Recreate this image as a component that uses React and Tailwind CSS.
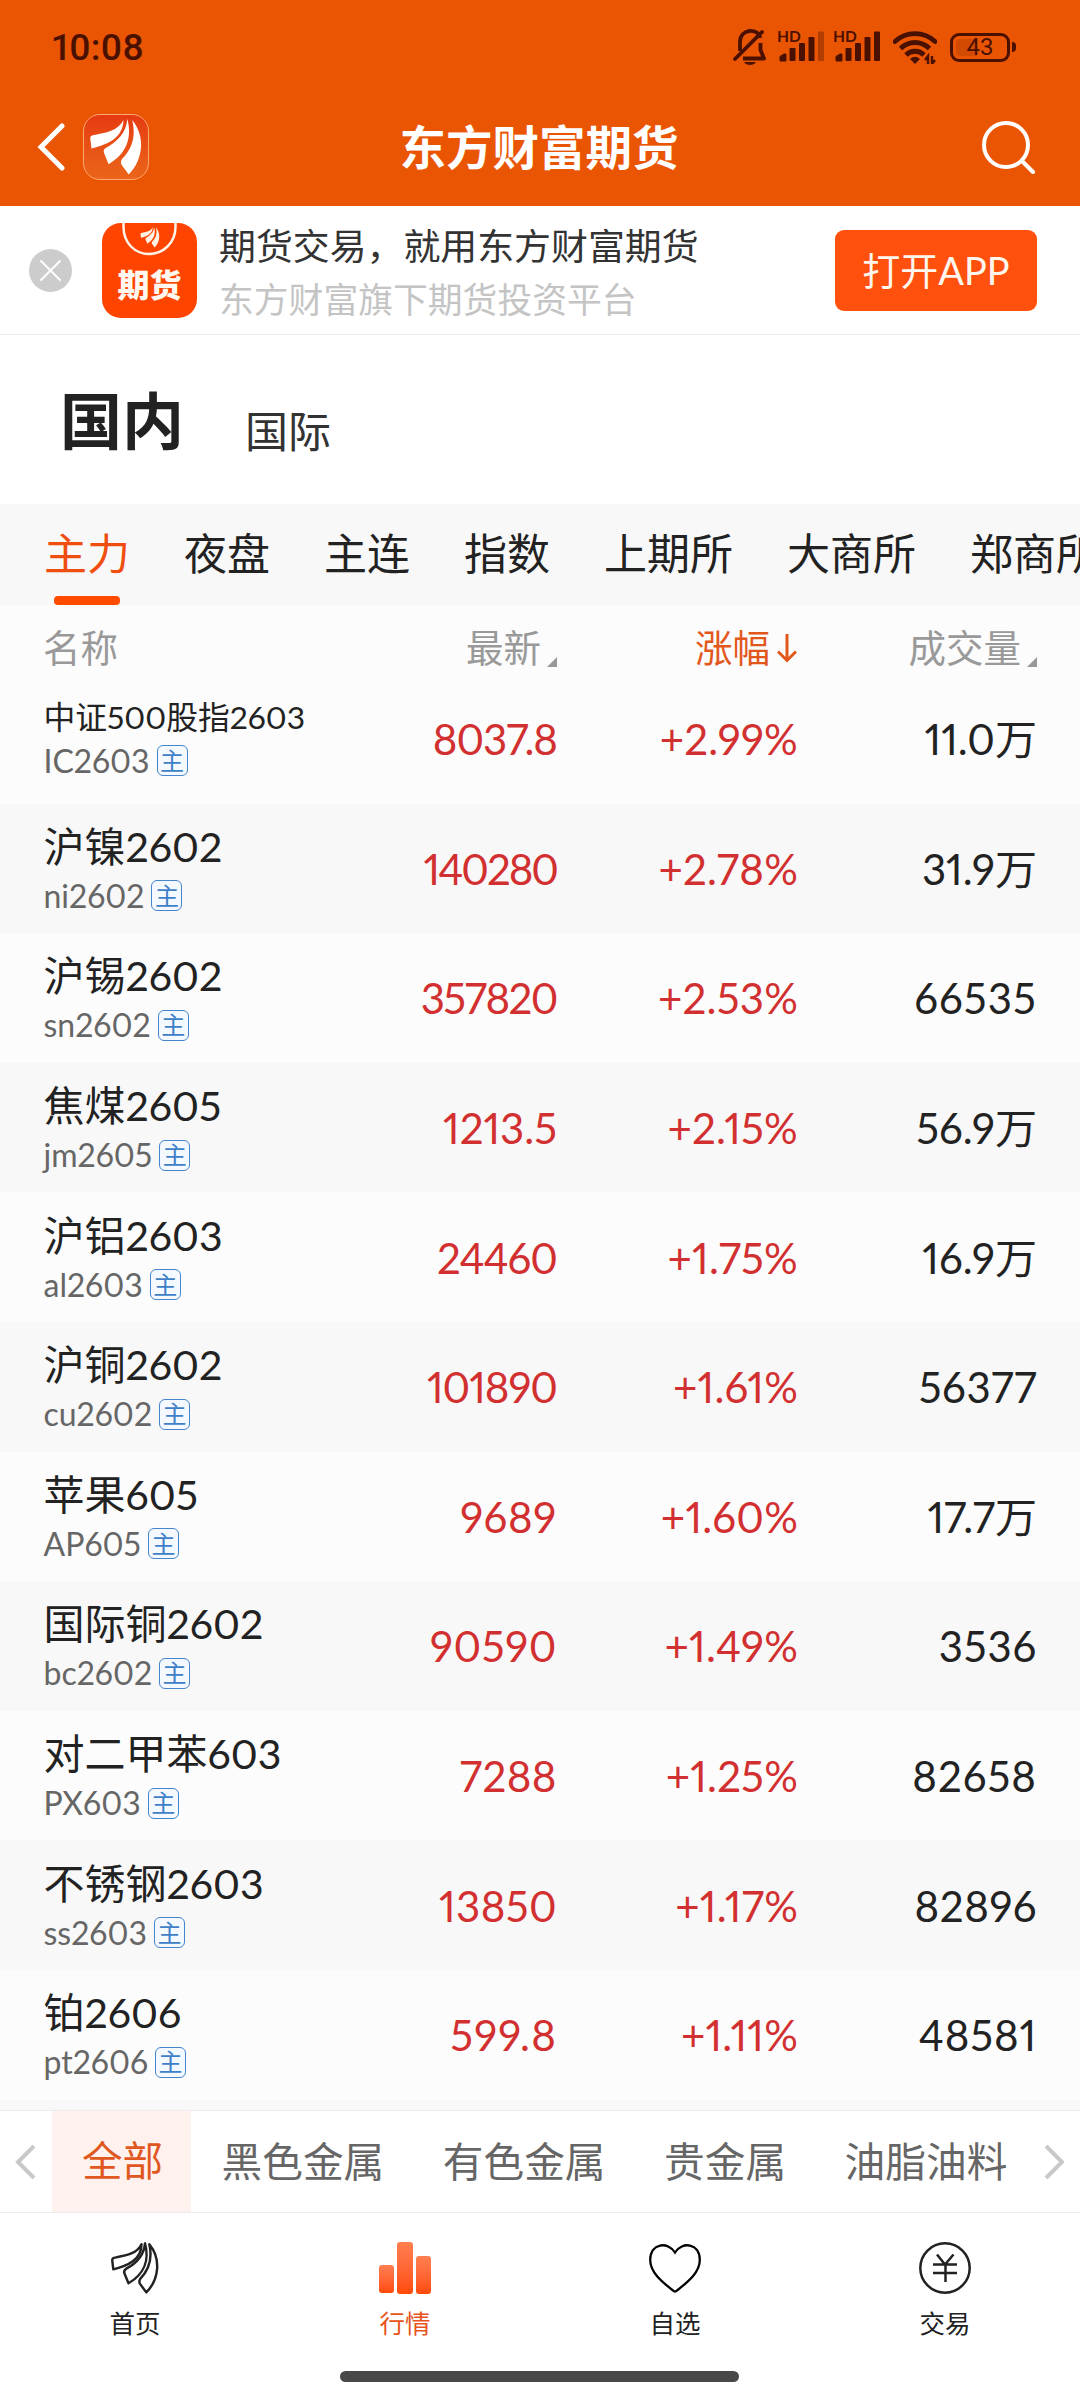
import React from 'react'

const rows = [
    { name: '中证500股指2603', code: 'IC2603', price: '8037.8', change: '+2.99%', volume: '11.0万', small: true, fit: 'tracking-[-1px]' },
    { name: '沪镍2602', code: 'ni2602', price: '140280', change: '+2.78%', volume: '31.9万', fit: 'tracking-[-2px]' },
    { name: '沪锡2602', code: 'sn2602', price: '357820', change: '+2.53%', volume: '66535', fit: 'tracking-[-1.5px]', volFit: 'tracking-[1.1px]' },
    { name: '焦煤2605', code: 'jm2605', price: '1213.5', change: '+2.15%', volume: '56.9万' },
    { name: '沪铝2603', code: 'al2603', price: '24460', change: '+1.75%', volume: '16.9万', fit: 'tracking-[-1px]' },
    { name: '沪铜2602', code: 'cu2602', price: '101890', change: '+1.61%', volume: '56377', fit: 'tracking-[-1px]', volFit: 'tracking-[0.6px]' },
    { name: '苹果605', code: 'AP605', price: '9689', change: '+1.60%', volume: '17.7万', fit: 'tracking-[0.7px]' },
    { name: '国际铜2602', code: 'bc2602', price: '90590', change: '+1.49%', volume: '3536', fit: 'tracking-[0.6px]', volFit: 'tracking-[0.8px]' },
    { name: '对二甲苯603', code: 'PX603', price: '7288', change: '+1.25%', volume: '82658', fit: 'tracking-[0.5px]', volFit: 'tracking-[1px]' },
    { name: '不锈钢2603', code: 'ss2603', price: '13850', change: '+1.17%', volume: '82896', fit: 'tracking-[0.4px]', volFit: 'tracking-[0.6px]' },
    { name: '铂2606', code: 'pt2606', price: '599.8', change: '+1.11%', volume: '48581', fit: 'tracking-[1.2px]', volFit: 'tracking-[0.9px]' },
]

const tabs = ['主力', '夜盘', '主连', '指数', '上期所', '大商所', '郑商所']
const categories = ['全部', '黑色金属', '有色金属', '贵金属', '油脂油料']

function Wings({ className, ...props }) {
    return (
        <svg viewBox="0 0 53 58" className={className} {...props}>
            <path d="M34 1C29 12 16 14 3 16.500Q0 17 0.300 20L1.500 30C18 26 34 19 34 1Z" />
            <path d="M38 0C37 14 28 23 16 29.500Q13 31.500 14.500 35L19 46C38 35 43 18 38 0Z" />
            <path d="M43 1C47 18 43 30 32.500 41Q30.500 44 32.500 47L39.500 56.500C54 42 57 18 43 1Z" />
        </svg>
    )
}

function Signal({ weak }) {
    return (
        <svg viewBox="0 0 48 32" className="w-12 h-8 overflow-visible">
            <text x="-1" y="11" fontSize="15.500" fontWeight="700" className="font-['Lato']" fill="#4a1000">HD</text>
            <path d="M2 30V25.500L6 23H8V30Z" fill="#4a1000" stroke="#4a1000" strokeLinejoin="round" />
            <rect x="11.5" y="17" width="6" height="13" rx="1" fill="#4a1000" />
            <rect x="21" y="12" width="6" height="18" rx="1" fill="#4a1000" />
            <rect x="30.500" y="6" width="6" height="24" rx="1" fill="#4a1000" />
            <rect x="40" y="0.500" width="6" height="29.500" rx="1" fill="#4a1000" opacity={weak ? 0.35 : 1} />
        </svg>
    )
}

function StatusBar() {
    return (
        <div className="flex h-[88px] items-center justify-between pl-[52px] pr-[64px] pt-[6px] text-[#4a1000]">
            <span className="font-['Roboto'] text-[37px] font-medium leading-none">10:08</span>
            <div className="flex items-center">
                <svg viewBox="0 0 34 36" className="w-[34px] h-9 mr-[11px]" fill="none" stroke="#4a1000" strokeWidth="3.800">
                    <path d="M7 22V13C7 -1 26 -1 27 9" />
                    <path d="M2 30L29 3" strokeLinecap="round" />
                    <path d="M27.500 14V21L31 29.500H10" strokeLinejoin="round" />
                    <path d="M11 33H23C21 37 13 37 11 33Z" fill="#4a1000" stroke="none" />
                </svg>
                <Signal weak />
                <span className="w-2" />
                <Signal />
                <svg viewBox="0 0 44 34" className="w-11 h-[34px] ml-[11px]" fill="none" stroke="#4a1000" strokeWidth="4.800">
                    <path d="M2 11.500C13 1 31 1 42 11.500" strokeLinecap="round" />
                    <path d="M7.500 18.500C16 10.500 28 10.500 36.500 18.500" />
                    <path d="M13 25C18 20 26 20 31 25" />
                    <path d="M17 29Q22 24.500 27 29L22 34Z" fill="#4a1000" stroke="none" />
                    <path d="M35 34V26L32 30M39 26V34L42 30" strokeWidth="2.400" />
                </svg>
                <div className="flex items-center ml-[13px]">
                    <div className="flex h-[29px] w-[60px] rounded-[9px] border-[3px] border-[#4a1000] p-[3px] relative">
                        <div className="w-[21px] rounded-l-[4px] bg-[#d34b03]"></div>
                        <span className="absolute inset-0 flex items-center justify-center font-['Roboto'] text-[24px] leading-none">43</span>
                    </div>
                    <div className="ml-[2px] h-[10px] w-[4px] rounded-r bg-[#4a1000]"></div>
                </div>
            </div>
        </div>
    )
}

function Banner() {
    return (
        <div className="flex h-[129px] items-center border-b border-[#ececec] bg-white pl-[29px] pr-[43px]">
            <svg viewBox="0 0 43 43" className="w-[43px] h-[43px]">
                <circle cx="21.5" cy="21.5" r="21.5" fill="#cccccc" />
                <path d="M12 12L31 31M31 12L12 31" stroke="#fff" strokeWidth="2" strokeLinecap="round" />
            </svg>
            <div className="ml-[30px] flex h-[95px] w-[95px] flex-col items-center overflow-hidden rounded-[19px] bg-[#ff4400]">
                <svg viewBox="0 0 56 34" className="w-14 h-[34px]">
                    <path d="M1.500 0V4C1.500 20 13 31 27 31S53.500 20 53.500 4V0" fill="none" stroke="#fff3e6" strokeWidth="2.500" />
                </svg>
                <Wings className="-mt-[30px] w-5 h-[21px]" fill="#fff3e6" />
                <span className="mt-[17px] font-['Noto_Sans_CJK_SC'] text-[32px] font-black leading-[36px] text-[#fff8f0]">期货</span>
            </div>
            <div className="ml-[22px] flex flex-col pt-[5px]">
                <span className="text-[36.9px] leading-[54px] text-[#333]">期货交易，就用东方财富期货</span>
                <span className="text-[34.8px] leading-[54px] text-[#c4c4c4]">东方财富旗下期货投资平台</span>
            </div>
            <button className="ml-auto h-[81px] w-[202px] rounded-[9px] bg-[#ff510d] text-[38px] leading-none text-[#fff6ee]">打开APP</button>
        </div>
    )
}

function Corner() {
    return (
        <svg viewBox="0 0 10 10" className="ml-[6px] mt-[28px] w-[10px] h-[10px]">
            <path d="M10 0V10H0Z" fill="#999" />
        </svg>
    )
}

function Row({ row, odd }) {
    return (
        <div className={odd ? 'flex h-[129.6px] items-center bg-[#f8f8f8] px-[43px]' : 'flex h-[129.6px] items-center bg-[#fcfcfc] px-[43px]'}>
            <div className="w-[273px] whitespace-nowrap pl-[0.5px]">
                <div className={row.small ? 'mt-[3px] mb-[1px] text-[31.8px] leading-[40px] text-[#222]' : 'mt-[3px] text-[41px] leading-[52px] text-[#222]'}>{row.name}</div>
                <div className="flex items-center leading-[46px]">
                    <span className="text-[32px] text-[#666]">{row.code}</span>
                    <span className="ml-[7px] flex h-[31px] w-[31px] items-center justify-center rounded-[6px] border-[1.5px] border-[#4585cc] bg-[#f3f9ff] text-[24px] leading-none text-[#3f7fc8]">主</span>
                </div>
            </div>
            <span className={`w-[241px] pt-[2px] text-right text-[42px] text-[#d23030] ${row.fit || ''}`}>{row.price}</span>
            <span className="w-[241px] pt-[2px] text-right text-[42px] tracking-[0.2px] text-[#d23030]">{row.change}</span>
            <span className={`w-[239px] pt-[2px] text-right text-[42px] text-[#222] ${row.volFit || ''}`}>{row.volume}</span>
        </div>
    )
}

function NavItem({ label, active, children }) {
    return (
        <div className="flex flex-1 flex-col items-center pt-[29px]">
            <div className="flex h-[52px] items-center">{children}</div>
            <span className={active ? 'mt-[12px] text-[25.500px] leading-[34px] text-[#e8541c]' : 'mt-[12px] text-[25.500px] leading-[34px] text-[#222]'}>{label}</span>
        </div>
    )
}

export default function App() {
    return (
        <div className="flex h-[2400px] w-[1080px] flex-col overflow-hidden bg-white font-['Lato','Noto_Sans_CJK_SC',sans-serif] proportional-nums">
            <header className="h-[206px] bg-[#ea5504]">
                <StatusBar />
                <div className="flex h-[118px] items-center pl-[37px] pr-[43px]">
                    <svg viewBox="0 0 28 48" className="w-7 h-12" fill="none" stroke="#fff" strokeWidth="5" strokeLinecap="round">
                        <path d="M25 3L4 24L25 45" />
                    </svg>
                    <div className="ml-[18px] flex h-[66px] w-[66px] items-center justify-center rounded-[17px] border border-[#ffa672] bg-linear-to-b from-[#e63913] to-[#ea6519]">
                        <Wings className="w-[52px] h-[57px]" fill="#fff" />
                    </div>
                    <h1 className="flex-1 pb-[3px] text-center font-['Noto_Sans_CJK_SC'] text-[46.5px] font-bold leading-none text-white">东方财富期货</h1>
                    <svg viewBox="0 0 56 54" className="ml-[52px] w-14 h-[54px]" fill="none" stroke="#fff" strokeWidth="4" strokeLinecap="round">
                        <circle cx="25" cy="25" r="22" />
                        <path d="M41 41L52 52" />
                    </svg>
                </div>
            </header>
            <Banner />
            <div className="flex h-[169px] items-baseline bg-white pl-[60px] pt-[40px]">
                <span className="text-[62px] font-bold leading-[92px] text-[#222]">国内</span>
                <span className="ml-[61px] text-[43px] text-[#333] relative top-[3px]">国际</span>
            </div>
            <div className="flex h-[101px] gap-[54px] bg-[#f8f8f8] pl-[44px]">
                {tabs.map((tab, i) => (
                    <div key={tab} className="flex shrink-0 flex-col items-center">
                        <span className={i === 0 ? 'text-[43px] leading-[92px] pt-[4px] -mb-[4px] text-[#f04e10]' : 'text-[43px] leading-[92px] pt-[4px] text-[#222]'}>{tab}</span>
                        {i === 0 && <div className="h-[9px] w-[66px] rounded-[4px] bg-[#ff4b00]"></div>}
                    </div>
                ))}
            </div>
            <div className="flex h-[69px] items-center bg-[#fcfcfc] px-[43px] pt-[17px] text-[37.5px] leading-none text-[#999]">
                <span className="w-[273px]">名称</span>
                <span className="flex w-[241px] items-center justify-end">最新<Corner /></span>
                <span className="flex w-[240px] items-center justify-end text-[#e2581c]">
                    涨幅
                    <svg viewBox="0 0 20 30" className="ml-[7px] w-5 h-[30px]" fill="none" stroke="#e2581c" strokeWidth="3">
                        <path d="M10 1V27M1 18.500L10 27.500L19 18.500" />
                    </svg>
                </span>
                <span className="flex w-[240px] items-center justify-end">成交量<Corner /></span>
            </div>
            <div className="h-[1436px] overflow-hidden bg-[#f8f8f8]">
                {rows.map((row, i) => (
                    <Row key={row.code} row={row} odd={i % 2 === 1} />
                ))}
            </div>
            <div className="flex h-[103px] items-center border-y border-[#ececec] bg-white">
                <svg viewBox="0 0 52 34" className="w-[52px] h-[34px]" fill="none" stroke="#c8c8c8" strokeWidth="4">
                    <path d="M34 1L18 17L34 33" />
                </svg>
                {categories.map((item, i) => (
                    <span key={item} className={i === 0 ? 'flex h-full shrink-0 items-center bg-[#fff1ed] pl-[30px] pr-[28px] text-[40.5px] text-[#e0581f]' : 'flex h-full shrink-0 items-center pl-[30.5px] pr-[28px] text-[40.7px] text-[#666]'}>{item}</span>
                ))}
                <svg viewBox="0 0 20 34" className="ml-auto mr-[16px] w-5 h-[34px] shrink-0" fill="none" stroke="#c8c8c8" strokeWidth="4">
                    <path d="M2 1L18 17L2 33" />
                </svg>
            </div>
            <nav className="flex flex-1">
                <NavItem label="首页">
                    <Wings className="w-[46px] h-[51px] overflow-visible" fill="none" stroke="#222" strokeWidth="2.800" strokeLinejoin="round" />
                </NavItem>
                <NavItem label="行情" active>
                    <div className="flex h-[52px] items-end gap-[3px]">
                        <div className="mb-[1px] h-[28px] w-[15px] rounded-[3px] bg-linear-to-b from-[#ff7f50] to-[#ff4a05]"></div>
                        <div className="h-[52px] w-[16px] rounded-[3px] bg-linear-to-b from-[#ff7f50] to-[#ff4a05]"></div>
                        <div className="h-[38px] w-[15px] rounded-[3px] bg-linear-to-b from-[#ff7f50] to-[#ff4a05]"></div>
                    </div>
                </NavItem>
                <NavItem label="自选">
                    <svg viewBox="0 0 52 50" className="w-[52px] h-[50px]" fill="none" stroke="#000" strokeWidth="2.300">
                        <path d="M26 9.500C19 -2 1.200 0 1.200 17C1.200 29 12 38 24 47.500Q26 49.500 28 47.500C40 38 50.800 29 50.800 17C50.800 0 33 -2 26 9.500Z" />
                    </svg>
                </NavItem>
                <NavItem label="交易">
                    <svg viewBox="0 0 52 52" className="w-[52px] h-[52px]" fill="none" stroke="#222" strokeWidth="2.500">
                        <circle cx="26" cy="26" r="24.700" />
                        <path d="M18 12.500L26 22.500L34.500 12.500M26.500 22V40M14 22.500H38M14 31H38" />
                    </svg>
                </NavItem>
            </nav>
            <div className="ml-[340px] mb-[18px] h-[11px] w-[399px] rounded-full bg-[#484848]"></div>
        </div>
    )
}
